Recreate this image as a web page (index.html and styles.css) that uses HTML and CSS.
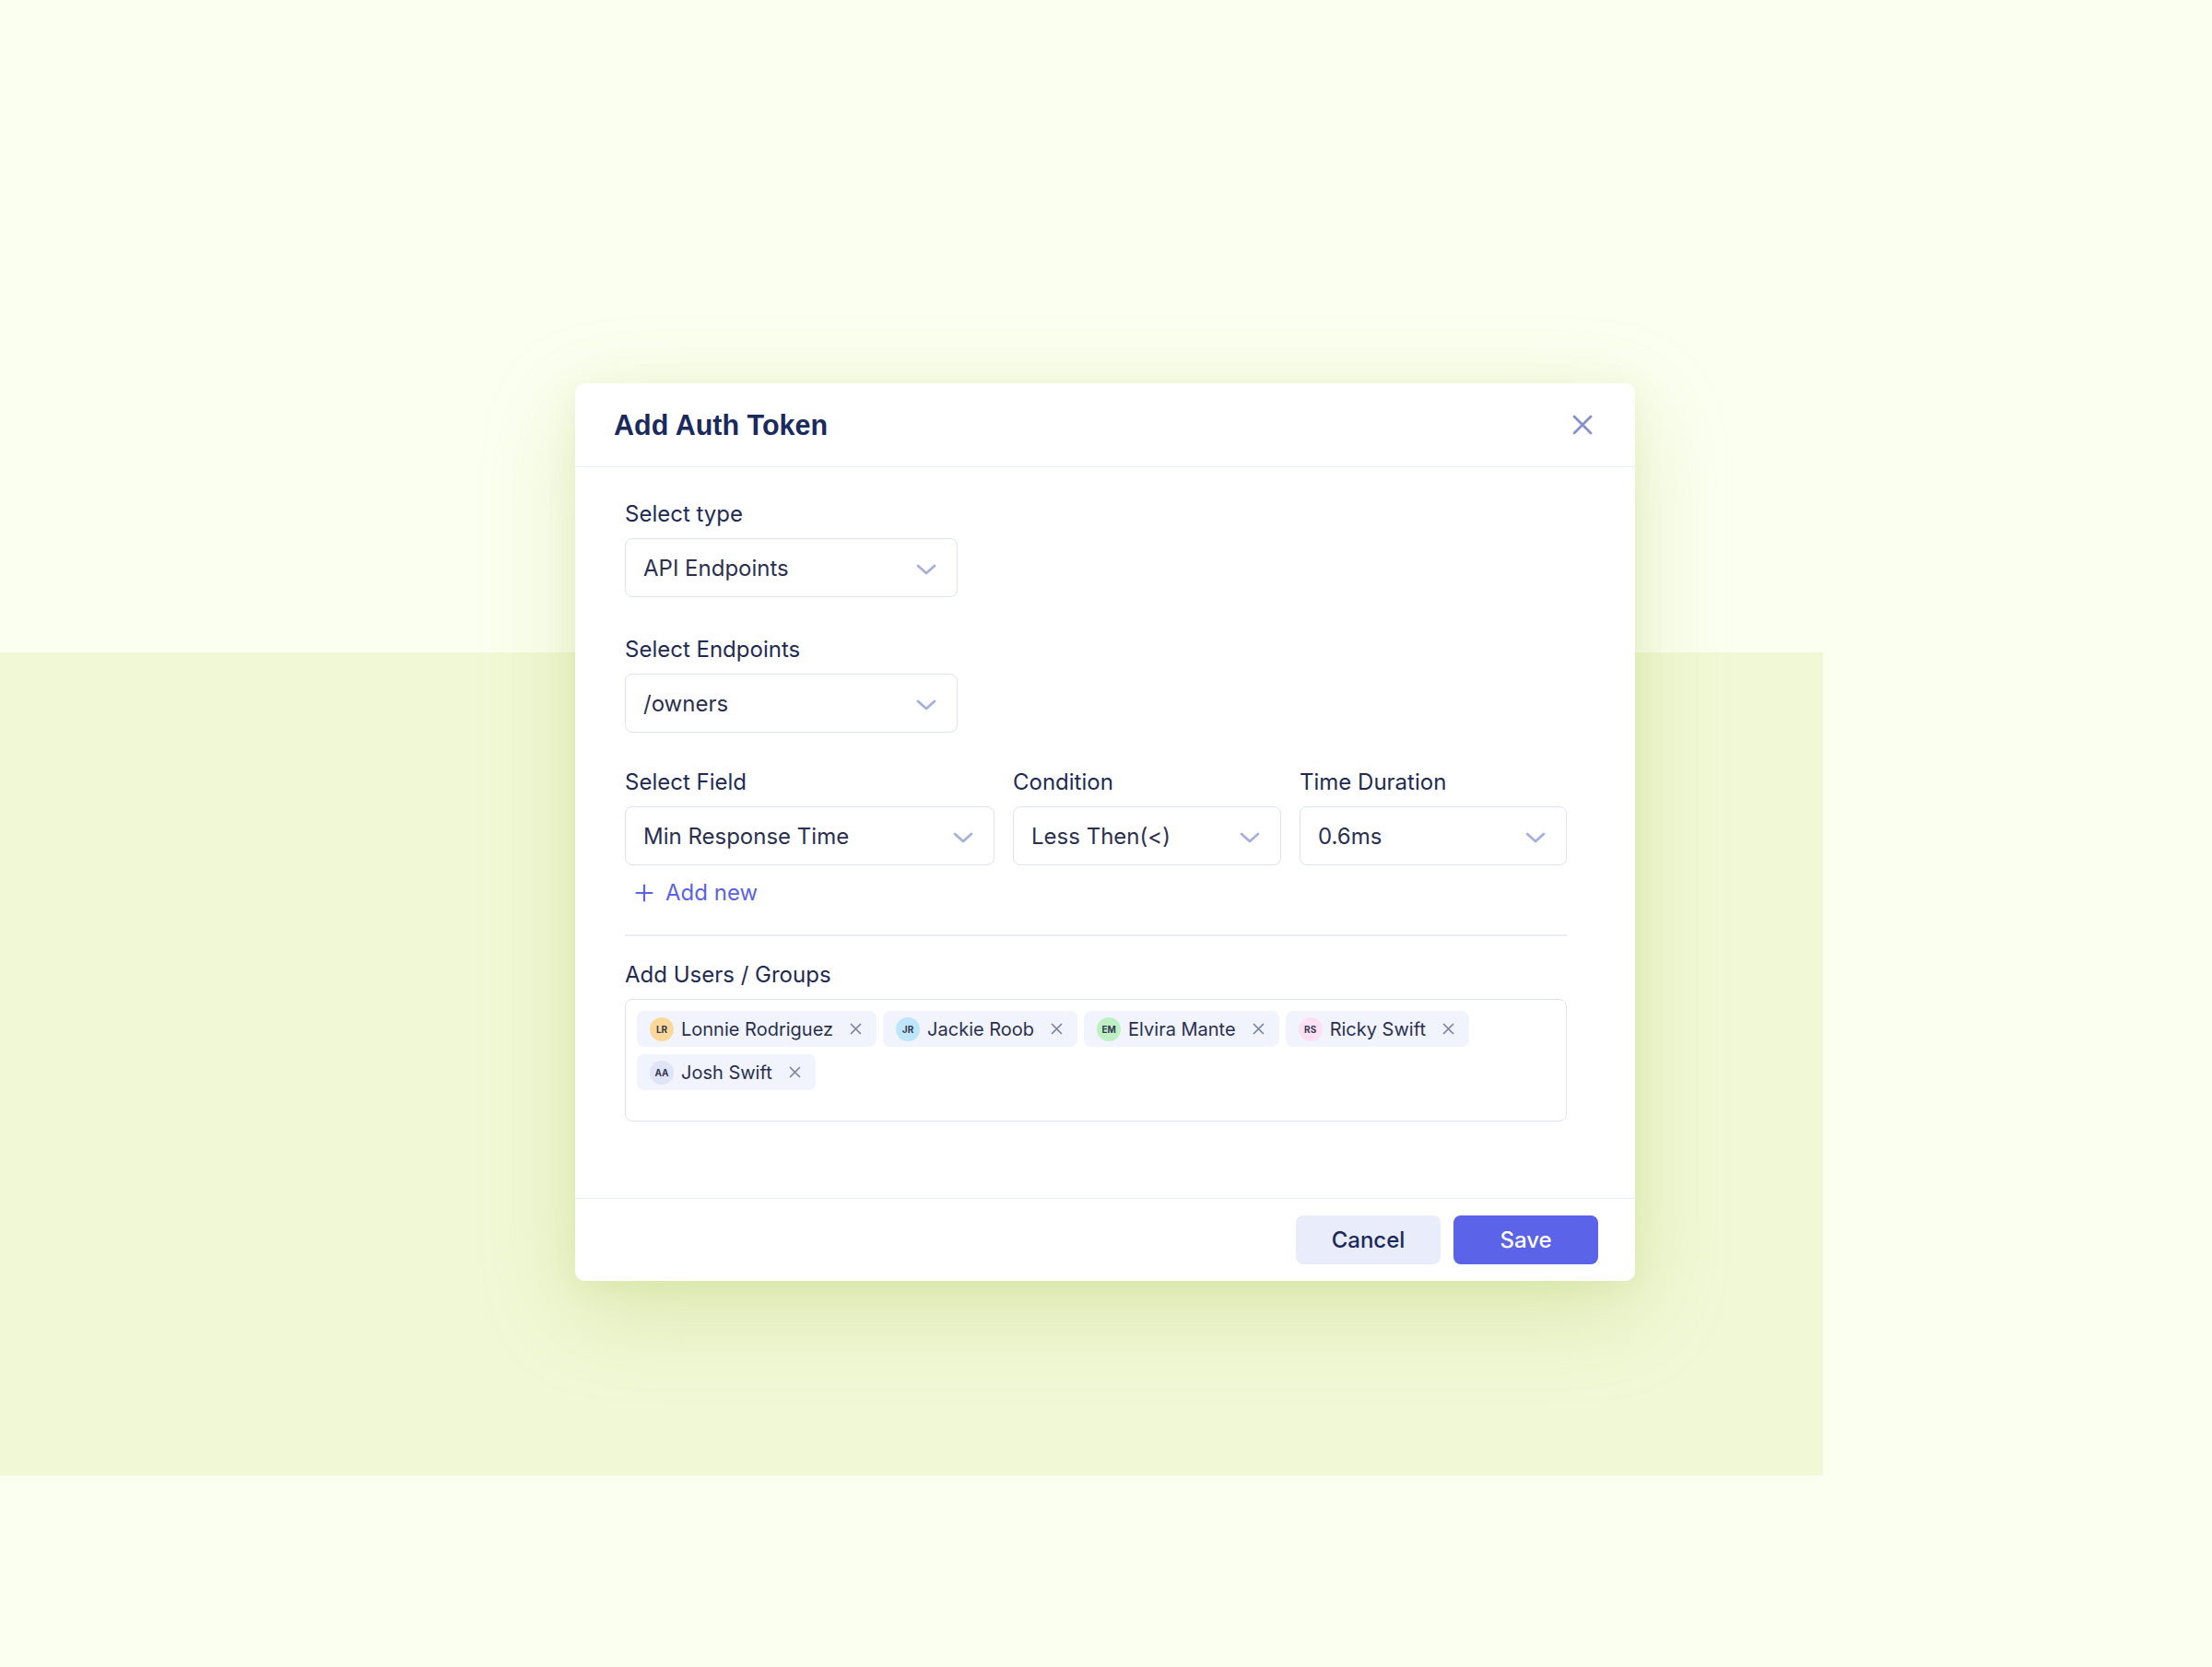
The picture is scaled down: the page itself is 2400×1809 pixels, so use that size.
FILE: index.html
```html
<!DOCTYPE html>
<html lang="en">
<head>
<meta charset="utf-8">
<title>Add Auth Token</title>
<link rel="stylesheet" href="styles.css">
</head>
<body>
<div class="page">
  <div class="modal">
    <div class="modal-header">
      <h2 class="modal-title">Add Auth Token</h2>
      <button class="close-btn" aria-label="Close">
        <svg width="22" height="22" viewBox="0 0 22 22"><path d="M2 2 L20 20 M20 2 L2 20" stroke="#8790cc" stroke-width="2.8" stroke-linecap="round" fill="none"/></svg>
      </button>
    </div>
    <div class="modal-body">
      <div class="field">
        <label class="label">Select type</label>
        <div class="select narrow"><span>API Endpoints</span><svg class="chev" width="22" height="14" viewBox="0 0 22 14"><path d="M2 3 L11 11 L20 3" stroke="#a7afdc" stroke-width="2.8" stroke-linecap="round" stroke-linejoin="round" fill="none"/></svg></div>
      </div>
      <div class="field f2">
        <label class="label">Select Endpoints</label>
        <div class="select narrow"><span>/owners</span><svg class="chev" width="22" height="14" viewBox="0 0 22 14"><path d="M2 3 L11 11 L20 3" stroke="#a7afdc" stroke-width="2.8" stroke-linecap="round" stroke-linejoin="round" fill="none"/></svg></div>
      </div>
      <div class="row">
        <div class="field">
          <label class="label">Select Field</label>
          <div class="select"><span>Min Response Time</span><svg class="chev" width="22" height="14" viewBox="0 0 22 14"><path d="M2 3 L11 11 L20 3" stroke="#a7afdc" stroke-width="2.8" stroke-linecap="round" stroke-linejoin="round" fill="none"/></svg></div>
        </div>
        <div class="field">
          <label class="label">Condition</label>
          <div class="select"><span>Less Then(&lt;)</span><svg class="chev" width="22" height="14" viewBox="0 0 22 14"><path d="M2 3 L11 11 L20 3" stroke="#a7afdc" stroke-width="2.8" stroke-linecap="round" stroke-linejoin="round" fill="none"/></svg></div>
        </div>
        <div class="field">
          <label class="label">Time Duration</label>
          <div class="select"><span>0.6ms</span><svg class="chev" width="22" height="14" viewBox="0 0 22 14"><path d="M2 3 L11 11 L20 3" stroke="#a7afdc" stroke-width="2.8" stroke-linecap="round" stroke-linejoin="round" fill="none"/></svg></div>
        </div>
      </div>
      <div class="add-new">
        <svg width="20" height="20" viewBox="0 0 20 20"><path d="M10 1.5 V18.5 M1.5 10 H18.5" stroke="#5b62e6" stroke-width="2.2" stroke-linecap="round" fill="none"/></svg>
        <span>Add new</span>
      </div>
      <div class="divider"></div>
      <div class="field">
        <label class="label">Add Users / Groups</label>
        <div class="tags">
          <div class="tag"><span class="avatar av-lr">LR</span><span class="tag-name">Lonnie Rodriguez</span><svg class="tag-x" width="13" height="13" viewBox="0 0 13 13"><path d="M1.5 1.5 L11.5 11.5 M11.5 1.5 L1.5 11.5" stroke="#7b81a3" stroke-width="1.7" stroke-linecap="round" fill="none"/></svg></div>
          <div class="tag"><span class="avatar av-jr">JR</span><span class="tag-name">Jackie Roob</span><svg class="tag-x" width="13" height="13" viewBox="0 0 13 13"><path d="M1.5 1.5 L11.5 11.5 M11.5 1.5 L1.5 11.5" stroke="#7b81a3" stroke-width="1.7" stroke-linecap="round" fill="none"/></svg></div>
          <div class="tag"><span class="avatar av-em">EM</span><span class="tag-name">Elvira Mante</span><svg class="tag-x" width="13" height="13" viewBox="0 0 13 13"><path d="M1.5 1.5 L11.5 11.5 M11.5 1.5 L1.5 11.5" stroke="#7b81a3" stroke-width="1.7" stroke-linecap="round" fill="none"/></svg></div>
          <div class="tag"><span class="avatar av-rs">RS</span><span class="tag-name">Ricky Swift</span><svg class="tag-x" width="13" height="13" viewBox="0 0 13 13"><path d="M1.5 1.5 L11.5 11.5 M11.5 1.5 L1.5 11.5" stroke="#7b81a3" stroke-width="1.7" stroke-linecap="round" fill="none"/></svg></div>
          <div class="tag"><span class="avatar av-aa">AA</span><span class="tag-name">Josh Swift</span><svg class="tag-x" width="13" height="13" viewBox="0 0 13 13"><path d="M1.5 1.5 L11.5 11.5 M11.5 1.5 L1.5 11.5" stroke="#7b81a3" stroke-width="1.7" stroke-linecap="round" fill="none"/></svg></div>
        </div>
      </div>
    </div>
    <div class="modal-footer">
      <button class="btn btn-cancel">Cancel</button>
      <button class="btn btn-save">Save</button>
    </div>
  </div>
</div>
</body>
</html>
```

FILE: styles.css
```css
html, body {
  margin: 0;
  padding: 0;
}
body {
  min-height: 1809px;
  background:
    linear-gradient(#f1f8d6, #f1f8d6) 0 708px / 1978px 893px no-repeat,
    #fbfff0;
  font-family: Inter, "Noto Sans", sans-serif;
  color: #1f2b52;
}
.page {
  padding: 416px 0 0 624px;
}
.modal {
  width: 1150px;
  background: #ffffff;
  border-radius: 10px;
  box-shadow: 0 30px 100px rgba(160, 190, 70, 0.28), 0 6px 30px rgba(160, 190, 70, 0.12);
}
.modal-header {
  height: 90px;
  display: flex;
  align-items: center;
  justify-content: space-between;
  padding: 0 46px 0 42px;
  border-bottom: 1px solid #e8ebf8;
}
.modal-title {
  margin: 0;
  font-family: "Liberation Sans", Arial, sans-serif;
  font-weight: 700;
  font-size: 30.5px;
  color: #1b2a5c;
}
.close-btn {
  border: 0;
  background: none;
  padding: 0;
  width: 22px;
  height: 22px;
  display: flex;
}
.modal-body {
  padding: 35px 74px 83px 54px;
}
.field {
  display: flex;
  flex-direction: column;
}
.f2 {
  margin-top: 41px;
}
.label {
  font-size: 24px;
  line-height: 32px;
  color: #1f2b52;
  margin-bottom: 10px;
}
.select {
  box-sizing: border-box;
  height: 64px;
  border: 1.5px solid #dde2f5;
  border-radius: 8px;
  display: flex;
  align-items: center;
  justify-content: space-between;
  padding: 0 22px 0 19px;
  font-size: 24px;
  color: #2b3050;
}
.select.narrow {
  width: 361px;
}
.chev {
  margin-top: 3px;
}
.row {
  margin-top: 38px;
  display: grid;
  grid-template-columns: 401px 291px 290px;
  column-gap: 20px;
}
.add-new {
  margin-top: 14px;
  padding-left: 11px;
  display: flex;
  align-items: center;
  gap: 13px;
  font-size: 24px;
  line-height: 32px;
  color: #5b62e6;
}
.divider {
  margin-top: 29px;
  margin-bottom: 26px;
  height: 2px;
  background: #e9ecf7;
}
.tags {
  box-sizing: border-box;
  min-height: 133px;
  border: 1.5px solid #dde2f5;
  border-radius: 8px;
  padding: 12px 12px;
  display: flex;
  flex-wrap: wrap;
  align-content: flex-start;
  gap: 8px 7px;
}
.tag {
  height: 39px;
  box-sizing: border-box;
  background: #f1f4fd;
  border-radius: 8px;
  padding: 0 16px 0 14px;
  display: flex;
  align-items: center;
  font-size: 20px;
  color: #2b3050;
}
.avatar {
  width: 26px;
  height: 26px;
  border-radius: 50%;
  display: grid;
  place-items: center;
  font-size: 10px;
  font-weight: 700;
  color: #353a52;
  margin-right: 8px;
}
.av-lr { background: #fcd99a; }
.av-jr { background: #bde6fb; }
.av-em { background: #bdf0c3; }
.av-rs { background: #fde0f3; }
.av-aa { background: #e0e4f7; }
.tag-x {
  margin-left: 18px;
}
.modal-footer {
  border-top: 1px solid #e8ebf8;
  padding: 18px 40px 18px 0;
  display: flex;
  justify-content: flex-end;
  gap: 14px;
}
.btn {
  width: 157px;
  height: 53px;
  border: 0;
  border-radius: 8px;
  font-family: Inter, "Noto Sans", sans-serif;
  font-size: 24px;
  font-weight: 500;
}
.btn-cancel {
  background: #e9ecfb;
  color: #1b2a5c;
}
.btn-save {
  background: #5b63e8;
  color: #ffffff;
}
```
